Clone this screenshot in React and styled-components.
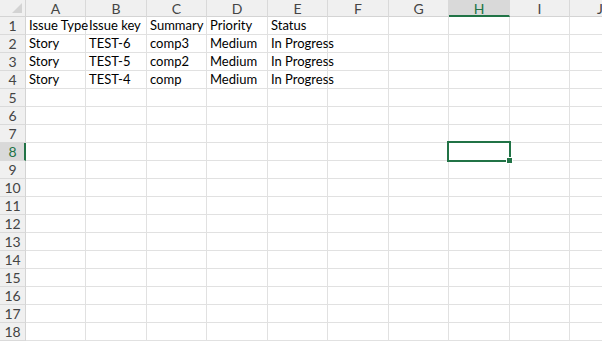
import React from "react";
import styled, { createGlobalStyle } from "styled-components";

const GlobalStyle = createGlobalStyle`
  html, body {
    margin: 0;
    padding: 0;
    background: #ffffff;
    overflow: hidden;
  }
`;

const COLS = ["A", "B", "C", "D", "E", "F", "G", "H", "I", "J"];
const WIDTHS = [60, 61, 60, 61, 60, 61, 60, 61, 60, 61];
const ROW_COUNT = 18;
const SELECTED = { col: "H", row: 8 };

const data = [
  ["Issue Type", "Issue key", "Summary", "Priority", "Status"],
  ["Story", "TEST-6", "comp3", "Medium", "In Progress"],
  ["Story", "TEST-5", "comp2", "Medium", "In Progress"],
  ["Story", "TEST-4", "comp", "Medium", "In Progress"],
];

const Sheet = styled.div`
  width: 602px;
  height: 341px;
  overflow: hidden;
  font-family: Lato, "Liberation Sans", sans-serif;
  font-size: 13px;
  color: #000;
`;

const Row = styled.div`
  display: flex;
  height: ${(p) => (p.$head ? 17 : 18)}px;
  width: max-content;
`;

const Corner = styled.div`
  position: relative;
  width: 26px;
  flex: none;
  background: #f0f0f0;
  border-right: 1px solid #d4d4d4;
  border-bottom: 1px solid #d4d4d4;
  box-sizing: border-box;

  &::after {
    content: "";
    position: absolute;
    right: 3px;
    bottom: 3px;
    border-left: 10px solid transparent;
    border-bottom: 10px solid #d3d3d3;
  }
`;

const ColHead = styled.div`
  width: ${(p) => p.$w}px;
  flex: none;
  box-sizing: border-box;
  display: flex;
  align-items: center;
  justify-content: center;
  background: ${(p) => (p.$active ? "#d9d9d9" : "#f0f0f0")};
  color: ${(p) => (p.$active ? "#217346" : "#444")};
  border-right: 1px solid #d9d9d9;
  border-bottom: ${(p) => (p.$active ? "2px solid #217346" : "1px solid #d4d4d4")};
  padding-top: ${(p) => (p.$active ? 1 : 0)}px;
  font-size: 14px;
`;

const RowHead = styled.div`
  width: 26px;
  flex: none;
  box-sizing: border-box;
  display: flex;
  align-items: center;
  justify-content: center;
  background: ${(p) => (p.$active ? "#d9d9d9" : "#f0f0f0")};
  color: ${(p) => (p.$active ? "#217346" : "#444")};
  border-bottom: 1px solid #dadada;
  border-right: ${(p) => (p.$active ? "2px solid #217346" : "1px solid #d4d4d4")};
  padding-left: ${(p) => (p.$active ? 1 : 0)}px;
  font-size: 14px;
`;

const Cell = styled.div`
  position: relative;
  width: ${(p) => p.$w}px;
  flex: none;
  box-sizing: border-box;
  border-right: 1px solid #e1e1e1;
  border-bottom: 1px solid #e1e1e1;
  display: flex;
  align-items: flex-end;
  padding: 0 0 1px 3px;
  white-space: nowrap;
  line-height: 16px;
`;

const Selection = styled.div`
  position: absolute;
  left: -2px;
  top: -2px;
  right: -2px;
  bottom: -2px;
  border: 2px solid #217346;
  z-index: 2;

  &::after {
    content: "";
    position: absolute;
    right: -4px;
    bottom: -4px;
    width: 5px;
    height: 5px;
    background: #217346;
    border: 1px solid #fff;
  }
`;

export default function App() {
  return (
    <Sheet>
      <GlobalStyle />
      <Row $head>
        <Corner />
        {COLS.map((c, i) => (
          <ColHead key={c} $w={WIDTHS[i]} $active={c === SELECTED.col}>
            {c}
          </ColHead>
        ))}
      </Row>
      {Array.from({ length: ROW_COUNT }, (_, r) => (
        <Row key={r}>
          <RowHead $active={r + 1 === SELECTED.row}>{r + 1}</RowHead>
          {COLS.map((c, i) => (
            <Cell key={c} $w={WIDTHS[i]}>
              {data[r] && data[r][i]}
              {c === SELECTED.col && r + 1 === SELECTED.row && <Selection />}
            </Cell>
          ))}
        </Row>
      ))}
    </Sheet>
  );
}
